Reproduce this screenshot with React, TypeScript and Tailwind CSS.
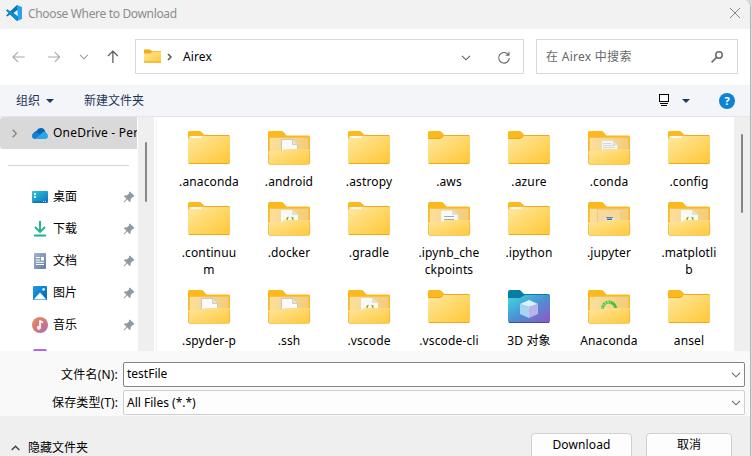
import React from "react";

type Kind = "plain" | "paper" | "doc" | "code" | "lines" | "jupyter" | "conda" | "cube";

function Folder({ kind, lip }: { kind: Kind; lip?: boolean }) {
  if (kind === "cube")
    return (
      <svg width="42" height="34" viewBox="0 0 42 34" className="block">
        <path d="M0 2Q0 0 2 0H12L16 4H40Q42 4 42 6V20H0Z" fill="#077ca6" />
        <path d="M0 8H12L17 5H40.500Q42 5 42 6.500V31Q42 33 40 33H2Q0 33 0 31Z" fill="url(#cubeFolder)" />
        <path d="M1 32.500H41" stroke="#3551a0" />
        <path d="M12 14L21 10L30 14L21 17Z" fill="#d6f2fb" />
        <path d="M12 14L21 17V28L12 24Z" fill="#a5d5f1" />
        <path d="M30 14L21 17V28L30 24Z" fill="#b9b4ea" />
      </svg>
    );
  if (kind === "plain")
    return (
      <svg width="42" height="34" viewBox="0 0 42 34" className="block">
        <path d="M0 1.500Q0 0 1.500 0H11Q12.500 0 13.500 1L16.500 4H40.500Q42 4 42 5.500V12H0Z" fill="#fbb91b" />
        <path d="M0 7.500H11Q13 7.500 15 5.500L16 5H40.500Q42 5 42 6.500V31.500Q42 33 40.500 33H1.500Q0 33 0 31.500Z" fill="url(#folder)" />
        {lip ? (
          <path d="M1.500 5H15.500L13 7Q12.500 7.500 11.500 7.500H1.500Z" fill="#f9f8f2" />
        ) : (
          <path d="M0.500 7.500H11Q13 7.500 15 5.500" fill="none" stroke="#e5a51d" />
        )}
        <path d="M17 4.500H41" stroke="#eba91b" />
        <path d="M1 32.500H41" stroke="#f0a91d" />
      </svg>
    );
  return (
    <svg width="43" height="35" viewBox="0 0 43 35" className="-mr-px -mb-px block">
      <path d="M0 1.500Q0 0 1.500 0H13Q14.500 0 15.500 1L18.500 4.500H40.500Q42 4.500 42 6V29H0Z" fill="#fbb91b" />
      <rect x="1.500" y="6.500" width="39" height="24" rx="1" fill="url(#inner)" stroke="#f3c257" />
      {kind === "paper" && (
        <>
          <path d="M13.500 8.500H25L29.500 13V25H13.500Z" fill="#fafafa" stroke="#d1c7b4" />
          <path d="M24.500 8.500V13.500H29.500" fill="#e3e3e3" stroke="#c8c4bb" strokeWidth=".8" />
        </>
      )}
      {kind === "doc" && (
        <>
          <path d="M13.500 9.500H25L29.500 14V25H13.500Z" fill="#f5f5f3" stroke="#e8dec6" />
          <path d="M25 9.500V14H29.500" fill="#ddd" />
          <path d="M15 12.500H23M15 14.500H27M15 16.500H27M15 18.500H22" stroke="#cecece" strokeWidth=".8" />
        </>
      )}
      {kind === "lines" && (
        <>
          <path d="M13 8.500H24L30 13V25H13Z" fill="#f9f9fa" stroke="#e5ddd0" strokeWidth=".6" />
          <path d="M24 8V13H30" fill="#dde0e4" />
          <path d="M16 14.500H26M16 17.500H26" stroke="#9dabb5" />
        </>
      )}
      {kind === "code" && (
        <>
          <path d="M13 8H24L30 13V25H13Z" fill="#f9f9f7" />
          <path d="M24 8V13H30" fill="#dde0df" />
          <path d="M20.500 15.500Q19 15.300 19.200 17V19M23.500 15.500Q25 15.300 24.800 17V19" fill="none" stroke="#a5a719" strokeWidth="1.500" />
        </>
      )}
      {kind === "jupyter" && (
        <>
          <rect x="9.500" y="7.500" width="23" height="20" fill="#f8d999" stroke="#eac980" strokeWidth=".8" />
          <rect x="17" y="15" width="9" height="6" fill="#dfe5ea" />
          <rect x="18" y="15" width="7" height="1" fill="#79818a" />
          <rect x="19" y="16.500" width="5" height="2" fill="#1680cc" />
        </>
      )}
      {kind === "conda" && (
        <>
          <path d="M14.500 19C15 10 25 10 28 18" fill="none" stroke="#3fc43c" strokeWidth="3" />
          <path d="M14 19C15 12 20 11.500 23 12" fill="none" stroke="#91dd76" strokeWidth="2.500" strokeDasharray="2 1" />
        </>
      )}
      <path d="M0 21.500Q0 20 2 20H12Q14 20 15.500 18.800Q16.500 18 18.500 18H41Q42 18 42 19.500V31.500Q42 33 40.500 33H1.500Q0 33 0 31.500Z" fill="url(#front)" />
      <path d="M0.500 22V31.500Q0.500 33.500 2 33.500H40Q41.700 33.500 41.700 31.500V20" fill="none" stroke="#efb02e" strokeWidth=".7" />
    </svg>
  );
}

type File = { lines: string[]; kind: Kind; lip?: boolean };
const files: File[] = [
  { lines: [".anaconda"], kind: "plain", lip: true },
  { lines: [".android"], kind: "paper" },
  { lines: [".astropy"], kind: "plain", lip: true },
  { lines: [".aws"], kind: "plain" },
  { lines: [".azure"], kind: "plain" },
  { lines: [".conda"], kind: "doc" },
  { lines: [".config"], kind: "plain", lip: true },
  { lines: [".continuu", "m"], kind: "plain", lip: true },
  { lines: [".docker"], kind: "code" },
  { lines: [".gradle"], kind: "plain", lip: true },
  { lines: [".ipynb_che", "ckpoints"], kind: "lines" },
  { lines: [".ipython"], kind: "plain", lip: true },
  { lines: [".jupyter"], kind: "jupyter" },
  { lines: [".matplotli", "b"], kind: "code" },
  { lines: [".spyder-p"], kind: "paper" },
  { lines: [".ssh"], kind: "paper" },
  { lines: [".vscode"], kind: "code" },
  { lines: [".vscode-cli"], kind: "plain" },
  { lines: ["3D 对象"], kind: "cube" },
  { lines: ["Anaconda"], kind: "conda" },
  { lines: ["ansel"], kind: "plain" },
];

function Gradients() {
  return (
    <svg width="0" height="0" className="absolute">
      <defs>
        <linearGradient id="folder" x1="0" y1="0" x2="1" y2="1">
          <stop offset="0" stopColor="#ffe8a0" />
          <stop offset="1" stopColor="#ffc733" />
        </linearGradient>
        <linearGradient id="front" x1="0" y1="0" x2="1" y2="1">
          <stop offset="0" stopColor="#ffe7a0" />
          <stop offset="1" stopColor="#ffc93b" />
        </linearGradient>
        <linearGradient id="inner" x1="0" y1="0" x2="1" y2="0">
          <stop offset="0" stopColor="#fbdf9d" />
          <stop offset="1" stopColor="#f3cc7b" />
        </linearGradient>
        <linearGradient id="cubeFolder" x1="0" y1="0" x2="1" y2="1">
          <stop offset="0" stopColor="#3ddbe2" />
          <stop offset=".5" stopColor="#4b91d2" />
          <stop offset="1" stopColor="#9653c5" />
        </linearGradient>
        <linearGradient id="blue" x1="0" y1="0" x2="1" y2="1">
          <stop offset="0" stopColor="#2fc6dc" />
          <stop offset="1" stopColor="#0f70bd" />
        </linearGradient>
        <linearGradient id="photo" x1="0" y1="0" x2="1" y2="1">
          <stop offset="0" stopColor="#1b9de5" />
          <stop offset="1" stopColor="#0862b5" />
        </linearGradient>
        <linearGradient id="slate" x1="0" y1="0" x2="1" y2="1">
          <stop offset="0" stopColor="#9fb5cc" />
          <stop offset="1" stopColor="#627f9e" />
        </linearGradient>
        <linearGradient id="music" x1="0" y1="0" x2="1" y2="1">
          <stop offset="0" stopColor="#ef8c50" />
          <stop offset="1" stopColor="#b168ac" />
        </linearGradient>
        <linearGradient id="down" x1="0" y1="0" x2="0" y2="1">
          <stop offset="0" stopColor="#21b798" />
          <stop offset="1" stopColor="#12a98b" />
        </linearGradient>
      </defs>
    </svg>
  );
}

const Chevron = ({ className }: { className?: string }) => (
  <svg width="10" height="6" viewBox="0 0 10 6" fill="none" stroke="currentColor" strokeWidth="1.100" className={className}>
    <path d="M1 .8L5 4.800L9 .8" />
  </svg>
);

const Pin = () => (
  <svg width="12" height="12" viewBox="0 0 12 12" className="shrink-0">
    <path d="M6.800 .5L11.500 5L10.500 6L9.800 5.800L7.800 8L7.600 10.500L6.700 11L4.300 8.500L1 11.500L.5 11L3.500 7.700L1 5.200L1.700 4.300L4.200 4.200L6.300 2.200L6 1.300Z" fill="#8f9aa3" />
  </svg>
);

const places = [
  {
    name: "桌面",
    icon: (
      <>
        <rect y="2" width="16" height="12" rx="1" fill="url(#blue)" />
        <path d="M2 4H4V6H2ZM2 7H4V9H2Z" fill="#e9ffff" />
        <path d="M1 13H15" stroke="#0c62a3" />
        <path d="M11 12.500H15" stroke="#bdeaff" strokeDasharray="1 1" />
      </>
    ),
  },
  {
    name: "下载",
    icon: (
      <>
        <path d="M8 0V10.500M3 6L8 11L13 6" fill="none" stroke="#1eb294" strokeWidth="1.900" />
        <rect x="2" y="13.500" width="12" height="2" rx=".6" fill="url(#down)" />
      </>
    ),
  },
  {
    name: "文档",
    icon: (
      <>
        <rect x="2" width="12" height="16" rx="1" fill="url(#slate)" />
        <path d="M4 4.500H8M4 7H8M4 9.300H12M4 11.500H12" stroke="#fff" strokeWidth="1.100" />
        <rect x="9" y="4" width="3" height="3.500" fill="#fff" />
      </>
    ),
  },
  {
    name: "图片",
    icon: (
      <>
        <rect x="1" y="1" width="14" height="14" rx="1" fill="url(#photo)" />
        <path d="M2 14L8 7.500L14 14Q13.500 14.500 13 14.500H3Z" fill="#f4fbff" />
        <circle cx="11.600" cy="4.400" r="1.300" fill="#e0f5ff" />
      </>
    ),
  },
  {
    name: "音乐",
    icon: (
      <>
        <circle cx="8" cy="8" r="8" fill="url(#music)" />
        <path d="M8 3.300V10.500M8 4L11 5.500" stroke="#fff" strokeWidth="1.700" fill="none" />
        <circle cx="6.900" cy="10.800" r="2" fill="#fff" />
      </>
    ),
  },
];

export default function App() {
  return (
    <div className="relative flex h-[456px] w-[752px] overflow-hidden bg-[#dadada] font-['Noto_Sans','Noto_Sans_CJK_SC',sans-serif] text-[12px] leading-[17px] text-black">
      <Gradients />
      <div className="flex w-[751px] shrink-0 flex-col overflow-hidden rounded-tr-[7px] border-r border-[#b5b5b5] bg-white">
        <header className="flex h-[29px] shrink-0 items-center bg-[#f2f2f2] pr-[9px] pl-[6px] text-[#8d8d8d]">
          <svg width="16" height="16" viewBox="0 0 16 16" className="-mt-[3px]">
            <path d="M11 0L4 6.400L1.400 4.500L0 5.300L2.700 8L0 10.700L1.400 11.500L4 9.600L11 16L12 15.500V11.500L7.500 8L12 4.500V.5Z" fill="#0877bd" />
            <path d="M11 0L16 2V14L11 16L12 14Z" fill="#29a4ec" />
            <path d="M1.400 4.500L0 5.300L10.500 15.500L12 11.500Z" fill="#168acc" />
          </svg>
          <span className="mt-[-2px] ml-[6px] tracking-[-0.34px]">Choose Where to Download</span>
          <svg width="12" height="12" viewBox="0 0 12 12" className="-mt-[3px] ml-auto" stroke="#858585" strokeWidth="1">
            <path d="M1 1L11 11M11 1L1 11" />
          </svg>
        </header>

        <nav className="flex h-14 shrink-0 items-center pr-[12px] pb-px pl-[12px]">
          <svg width="14" height="12" viewBox="0 0 14 12" fill="none" stroke="#aaa" strokeWidth="1.200">
            <path d="M13 6H1M6 1L1 6L6 11" />
          </svg>
          <svg width="14" height="12" viewBox="0 0 14 12" fill="none" stroke="#aaa" strokeWidth="1.200" className="ml-[21px]">
            <path d="M1 6H13M8 1L13 6L8 11" />
          </svg>
          <Chevron className="ml-[19px] text-[#999]" />
          <svg width="12" height="14" viewBox="0 0 12 14" fill="none" stroke="#5c5c5c" strokeWidth="1.300" className="ml-[18px]">
            <path d="M6 13V1M1 6L6 1L11 6" />
          </svg>
          <div className="ml-[16px] flex h-[35px] w-[389px] shrink-0 items-center border border-[#d9d9d9] px-2">
            <svg width="17" height="14" viewBox="0 0 42 34" className="-mt-px">
              <path d="M0 1H15L20 5H42V12H0Z" fill="#f3ad13" />
              <path d="M0 11H15L20 7H42V33H0Z" fill="url(#folder)" />
              <path d="M0 32H42" stroke="#eeac29" strokeWidth="3" />
            </svg>
            <svg width="5" height="8" viewBox="0 0 5 8" fill="none" stroke="#555" strokeWidth="1.500" className="ml-[6px]">
              <path d="M1 1L4 4L1 7" />
            </svg>
            <span className="-mt-px ml-[11px] tracking-[0.1px]">Airex</span>
            <Chevron className="mt-[3px] ml-auto text-[#606060]" />
            <svg width="14" height="14" viewBox="0 0 14 14" fill="none" stroke="#666" strokeWidth="1.100" className="mt-[3px] mr-[4px] ml-[26px]">
              <path d="M11.500 4A5.300 5.300 0 1 0 12.300 7M11.900 1V4.300H8.600" />
            </svg>
          </div>
          <div className="ml-3 flex h-[35px] w-[202px] shrink-0 items-center border border-[#d9d9d9] pr-[14px] pl-[9px] text-[#686868]">
            <span className="tracking-[0.28px]">在 Airex 中搜索</span>
            <svg width="12" height="12" viewBox="0 0 12 12" fill="none" stroke="#6b6b6b" strokeWidth="1.500" className="ml-auto">
              <circle cx="8" cy="4" r="3.200" />
              <path d="M5.600 6.400L.6 11.400" />
            </svg>
          </div>
        </nav>

        <div className="flex h-8 shrink-0 items-center border-b border-[#e4e5e7] bg-[#f4f5f8] pl-4 text-[#1d3658]">
          <span>组织</span>
          <svg width="8" height="4" viewBox="0 0 8 4" className="ml-[6px]" fill="#203864"><path d="M0 0H8L4 4Z" /></svg>
          <span className="ml-[30px]">新建文件夹</span>
          <svg width="12" height="12" viewBox="0 0 12 12" fill="none" stroke="#000" className="mr-[12px] -mt-px ml-auto">
            <rect x="1.500" y=".5" width="9" height="7" fill="#fff" />
            <path d="M2 9.500H10M3 11.500H9" />
          </svg>
          <svg width="8" height="4" viewBox="0 0 8 4" fill="#203864"><path d="M0 0H8L4 4Z" /></svg>
          <span className="mr-[15px] ml-[29px] flex size-4 items-center justify-center rounded-full bg-[#0e83d2] text-[11px] font-bold text-white">?</span>
        </div>

        <main className="flex h-[234px] shrink-0 overflow-hidden">
          <aside className="flex w-[138px] shrink-0 flex-col">
            <div className="mr-px flex h-8 shrink-0 items-center overflow-hidden rounded-l-[3px] bg-[#d9d9d9] pl-3 whitespace-nowrap">
              <svg width="5" height="9" viewBox="0 0 5 9" fill="none" stroke="#858585" strokeWidth="1.300" className="shrink-0"><path d="M.7 .7L4.300 4.500L.7 8.300" /></svg>
              <svg width="16" height="11" viewBox="0 0 16 11" className="ml-[15px] shrink-0">
                <path d="M3 8Q0 7 2 4.500Q3 3 4.500 3Q6 0 9 0Q12 0 13 3L14 6Z" fill="#0665b7" />
                <path d="M3 11Q0 11 0 8Q0 4.500 4 4L13 9Z" fill="#137fd1" />
                <path d="M3 11L10 5Q12 3 14 4.500Q16 6 16 8Q16 11 13 11Z" fill="#28a8e9" />
              </svg>
              <span className="-mt-px ml-[5px] tracking-[0.22px]">OneDrive - Per</span>
            </div>
            <div className="mr-[9px] ml-2 mt-4 mb-[15px] h-px shrink-0 bg-[#d3d3d3]" />
            {places.map((p) => (
              <div key={p.name} className="flex h-8 shrink-0 items-center pr-[3px] pl-8">
                <svg width="16" height="16" viewBox="0 0 16 16">{p.icon}</svg>
                <span className="mr-auto ml-[5px] -mt-px">{p.name}</span>
                <Pin />
              </div>
            ))}
            <div className="mt-2 ml-[33px] h-[14px] w-[14px] shrink-0 rounded-t-[2px] bg-[#b36af1]" />
          </aside>
          <div className="flex w-4 shrink-0 justify-center bg-[#efefef] pt-[25px]">
            <div className="h-[60px] w-[2px] rounded-full bg-[#888]" />
          </div>
          <div className="ml-[2px] w-px shrink-0 bg-[#f2f2f2]" />
          <div className="grid h-[248px] grow grid-cols-7 content-start gap-y-[11px] pt-[14px] pr-[5px] pl-[12px]">
            {files.map((f) => (
              <div key={f.lines[0]} className="flex flex-col items-center text-center whitespace-nowrap">
                <div className="h-[34px] w-[42px]"><Folder kind={f.kind} lip={f.lip} /></div>
                <div className="mt-[8px] pb-px tracking-[0.14px]">
                  {f.lines.map((l) => <div key={l}>{l}</div>)}
                </div>
              </div>
            ))}
          </div>
          <div className="flex w-4 shrink-0 justify-center bg-[#efefef] pt-[17px]">
            <div className="h-[79px] w-[2px] rounded-full bg-[#858585]" />
          </div>
        </main>

        <section className="flex h-[65px] shrink-0 flex-col gap-[3px] bg-[#f9f9f9] pt-[11px] pr-[5px]">
          <div className="flex h-[25px] items-center">
            <label className="mr-[5px] w-[118px] shrink-0 text-right tracking-[0.2px]">文件名(N):</label>
            <div className="flex h-[25px] grow items-center justify-between rounded-[2px] border border-[#858585] bg-white pr-[3px] pl-[3px]">
              <span className="-mt-[2px]">testFile</span><Chevron className="text-[#666]" />
            </div>
          </div>
          <div className="flex h-[25px] items-center">
            <label className="-mt-px mr-[5px] w-[118px] shrink-0 text-right tracking-[0.1px]">保存类型(T):</label>
            <div className="flex h-[25px] grow items-center justify-between rounded-[2px] border border-[#cfcfcf] bg-[#fdfdfd] pr-[3px] pl-[3px]">
              <span className="-mt-px">All Files (*.*)</span><Chevron className="text-[#666]" />
            </div>
          </div>
        </section>

        <footer className="flex h-[40px] shrink-0 overflow-hidden bg-[#efefef] pr-[18px] pl-[11px]">
          <svg width="9" height="6" viewBox="0 0 9 6" fill="none" stroke="#444" strokeWidth="1.500" className="mt-[29px]"><path d="M.7 5L4.500 1.200L8.300 5" /></svg>
          <span className="mt-[23px] ml-[8px]">隐藏文件夹</span>
          <button className="mt-[17px] ml-auto h-[26px] w-[101px] rounded-[4px] border border-[#d0d0d0] bg-[#fdfdfd] pb-[3px] tracking-[0.12px]">Download</button>
          <button className="mt-[17px] ml-[14px] h-[26px] w-[86px] rounded-[4px] border border-[#d0d0d0] bg-[#fdfdfd] pb-[3px]">取消</button>
        </footer>
      </div>
    </div>
  );
}
